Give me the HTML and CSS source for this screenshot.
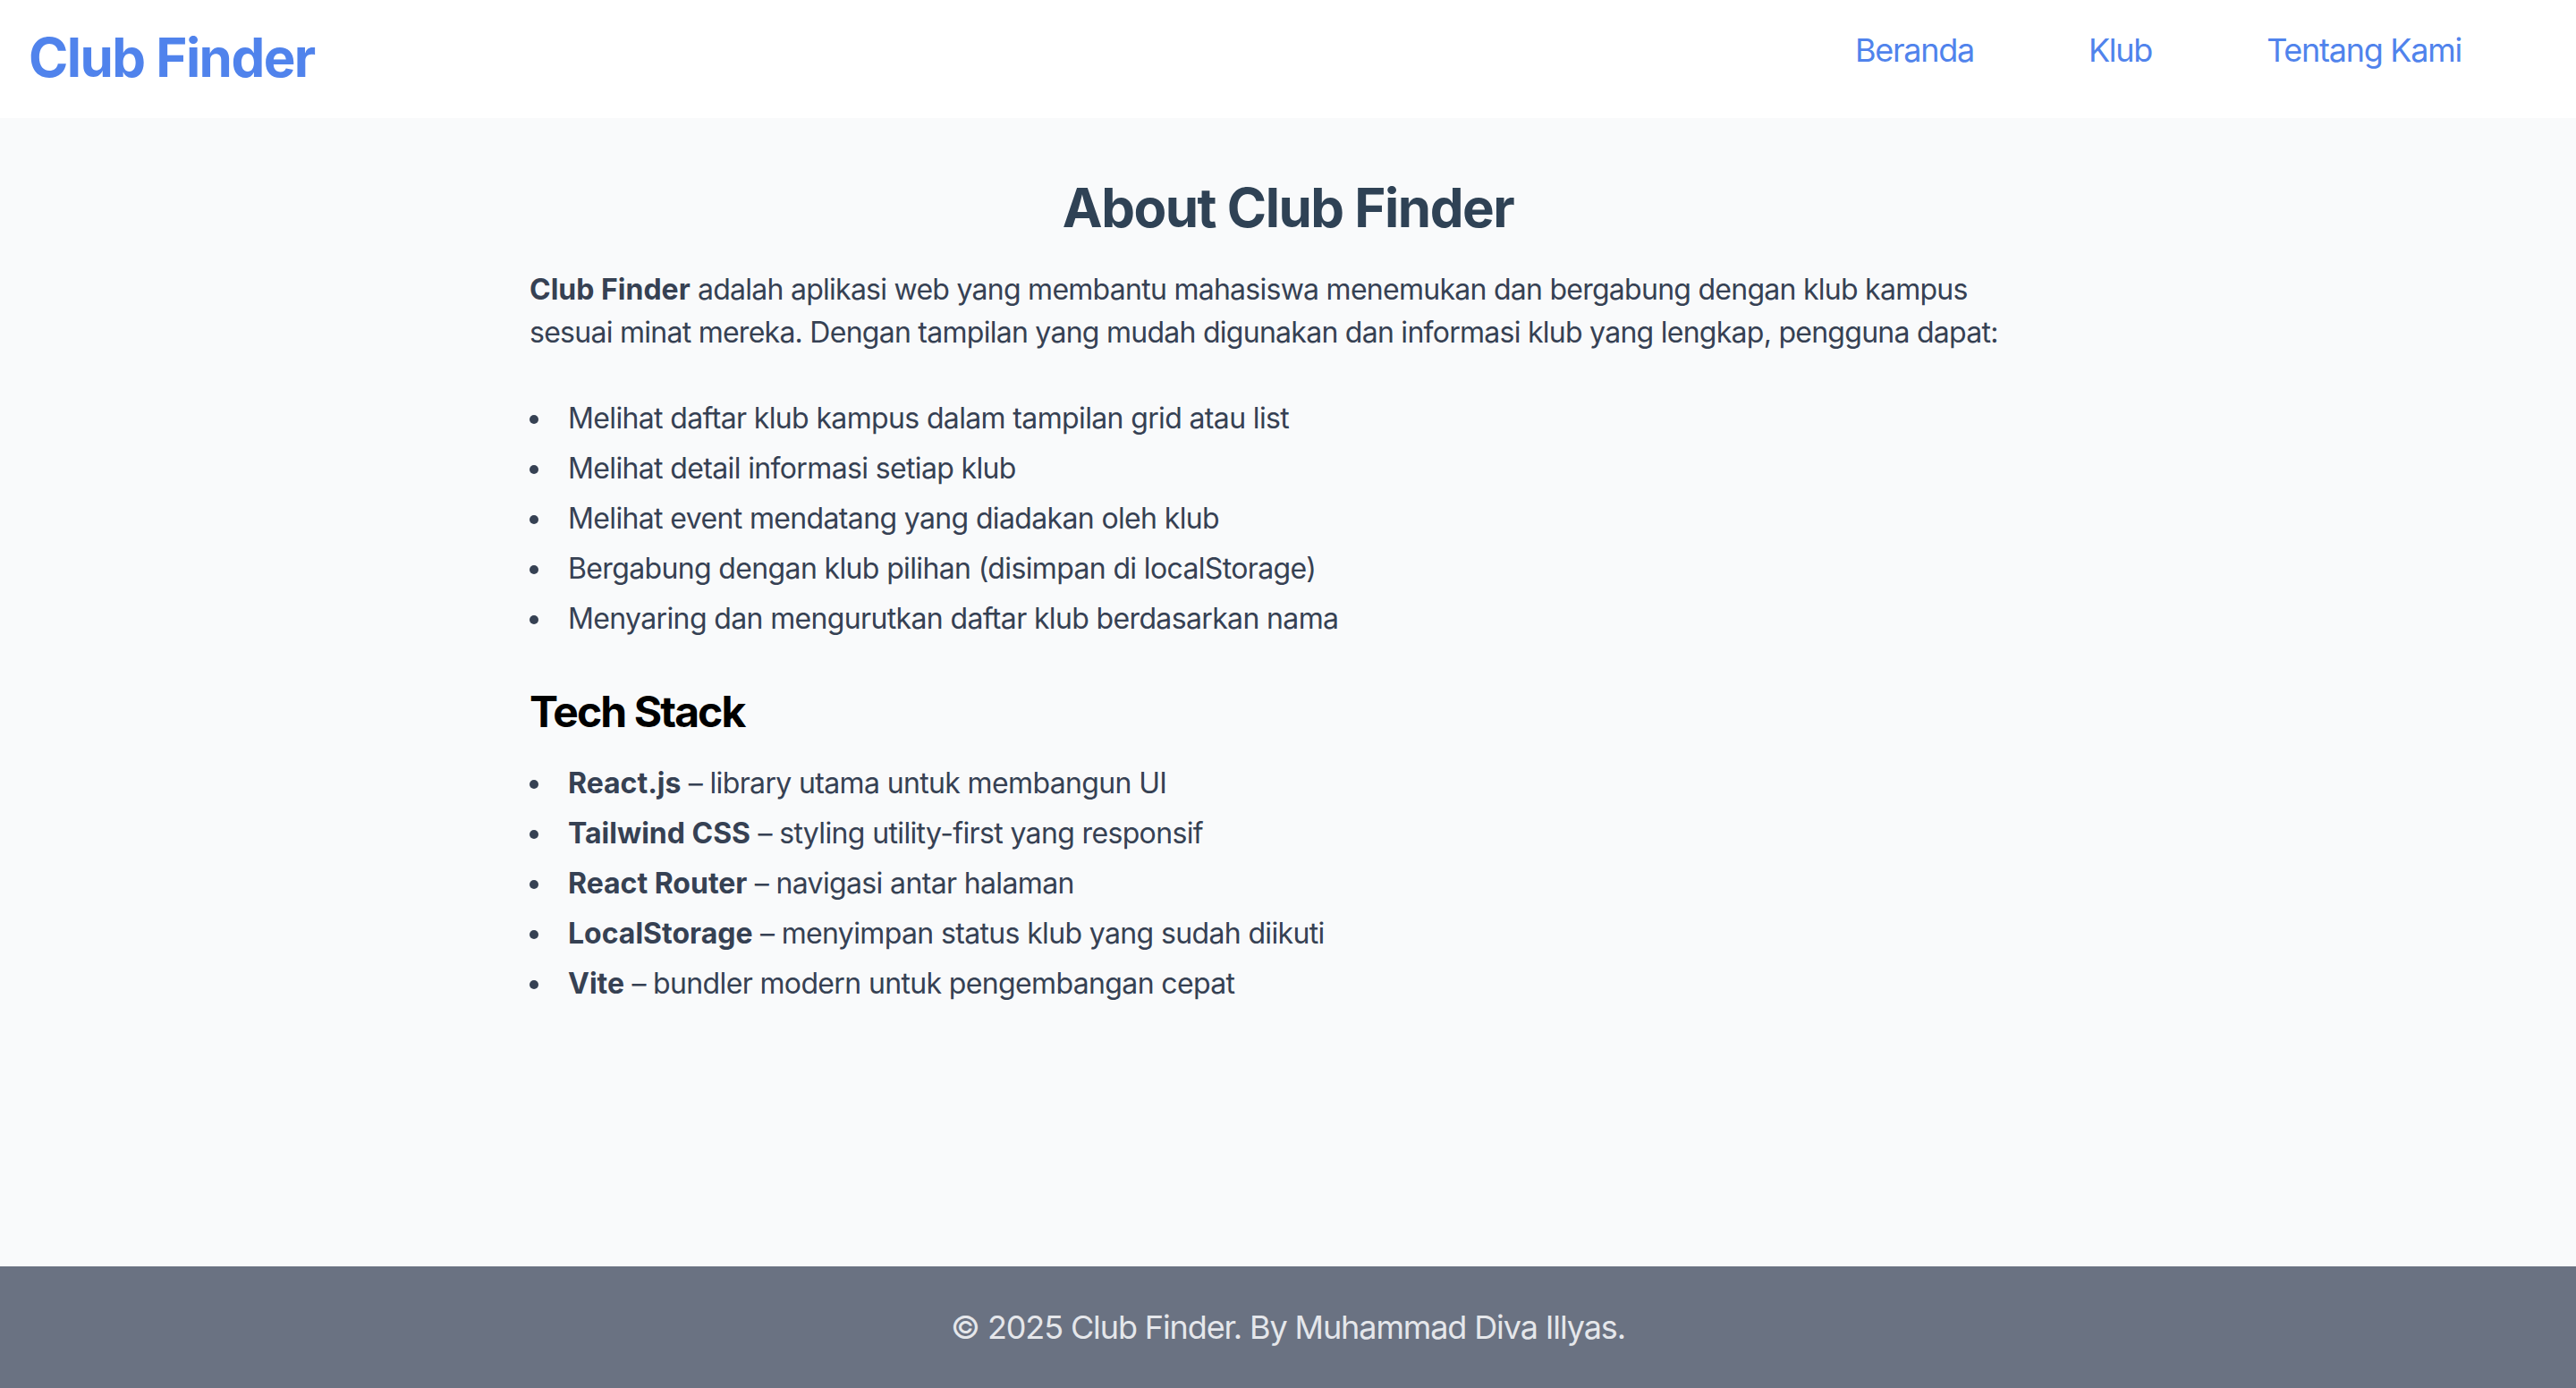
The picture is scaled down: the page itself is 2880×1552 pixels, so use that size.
FILE: index.html
```html
<!DOCTYPE html>
<html lang="id">
<head>
<meta charset="utf-8">
<title>Club Finder</title>
<link rel="stylesheet" href="styles.css">
</head>
<body>
<div class="app">
  <header class="topbar">
    <a class="logo" href="#">Club Finder</a>
    <nav class="nav">
      <a href="#">Beranda</a>
      <a href="#">Klub</a>
      <a href="#">Tentang Kami</a>
    </nav>
  </header>
  <main class="main">
    <div class="about">
      <h1 class="about-title">About Club Finder</h1>
      <p class="about-text"><strong>Club Finder</strong> adalah aplikasi web yang membantu mahasiswa menemukan dan bergabung dengan klub kampus sesuai minat mereka. Dengan tampilan yang mudah digunakan dan informasi klub yang lengkap, pengguna dapat:</p>
      <ul class="bullets features">
        <li>Melihat daftar klub kampus dalam tampilan grid atau list</li>
        <li>Melihat detail informasi setiap klub</li>
        <li>Melihat event mendatang yang diadakan oleh klub</li>
        <li>Bergabung dengan klub pilihan (disimpan di localStorage)</li>
        <li>Menyaring dan mengurutkan daftar klub berdasarkan nama</li>
      </ul>
      <h2 class="section-title">Tech Stack</h2>
      <ul class="bullets">
        <li><strong>React.js</strong> – library utama untuk membangun UI</li>
        <li><strong>Tailwind CSS</strong> – styling utility-first yang responsif</li>
        <li><strong>React Router</strong> – navigasi antar halaman</li>
        <li><strong>LocalStorage</strong> – menyimpan status klub yang sudah diikuti</li>
        <li><strong>Vite</strong> – bundler modern untuk pengembangan cepat</li>
      </ul>
    </div>
  </main>
  <footer class="footer">
    <p>© 2025 Club Finder. By Muhammad Diva Illyas.</p>
  </footer>
</div>
</body>
</html>
```

FILE: styles.css
```css
* { box-sizing: border-box; }

html, body {
  margin: 0;
  padding: 0;
}

body {
  font-family: Inter, "Noto Sans", "Liberation Sans", sans-serif;
  color: #364153;
  background: #f9fafb;
}

.app {
  min-height: 100vh;
  display: flex;
  flex-direction: column;
}

.topbar {
  background: #ffffff;
  display: flex;
  justify-content: space-between;
  align-items: flex-start;
  padding: 28px 128px 32px 32px;
}

.logo {
  font-size: 60px;
  line-height: 72px;
  font-weight: 700;
  color: #5083ec;
  text-decoration: none;
  letter-spacing: -0.026em;
}

.nav {
  display: flex;
  gap: 128px;
}

.nav a {
  font-size: 36px;
  line-height: 56px;
  color: #5083ec;
  text-decoration: none;
  letter-spacing: -0.035em;
}

.main {
  flex: 1;
  background: #f9fafb;
}

.about {
  max-width: 1792px;
  margin: 0 auto;
  padding: 64px 48px;
}

.about-title {
  margin: 0 0 32px;
  font-size: 60px;
  line-height: 72px;
  font-weight: 700;
  text-align: center;
  color: #2f4255;
  letter-spacing: -0.025em;
}

.about-text {
  margin: 0 0 48px;
  font-size: 32px;
  line-height: 48px;
  letter-spacing: -0.023em;
}

.about-text strong,
.bullets strong {
  font-weight: 700;
  letter-spacing: 0;
}

.bullets {
  margin: 0;
  padding: 0;
  list-style: disc inside;
  font-size: 32px;
  line-height: 48px;
  letter-spacing: -0.02em;
}

.bullets li + li {
  margin-top: 8px;
}

.features {
  margin-bottom: 48px;
}

.section-title {
  margin: 0 0 24px;
  font-size: 48px;
  line-height: 64px;
  font-weight: 700;
  color: #000000;
  letter-spacing: -0.04em;
}

.footer {
  background: #6a7282;
  color: #e5e7eb;
  text-align: center;
  padding: 40px;
}

.footer p {
  margin: 0;
  font-size: 36px;
  line-height: 56px;
  letter-spacing: -0.031em;
}
```
